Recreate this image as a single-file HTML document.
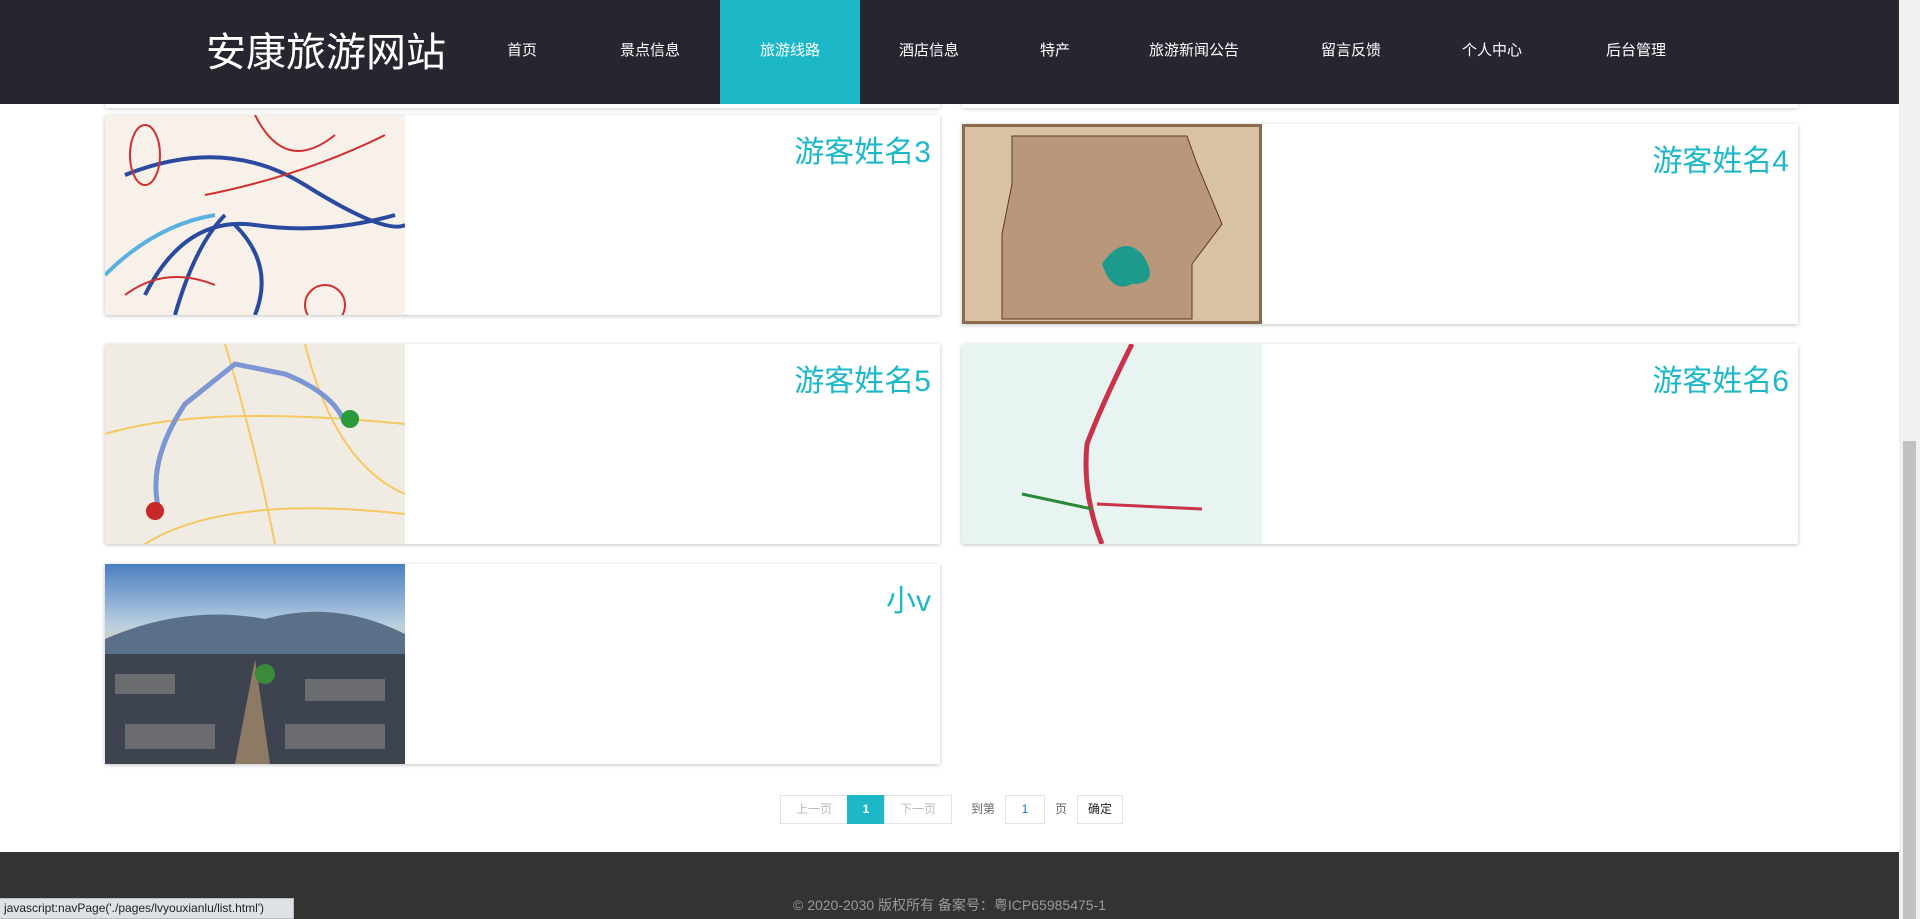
<!DOCTYPE html>
<html><head><meta charset="utf-8"><style>
*{margin:0;padding:0;box-sizing:border-box}
body{width:1920px;height:919px;overflow:hidden;background:#fff;font-family:"Liberation Sans","Noto Sans CJK SC",sans-serif;position:relative}
.hd{position:absolute;left:0;top:0;width:1899px;height:104px;background:#262630}
.logo{position:absolute;left:206px;top:25px;font-size:40px;color:#fff;line-height:56px}
.nav a{position:absolute;top:0;height:104px;line-height:102px;color:#fff;font-size:15px;text-align:center;width:140px;text-decoration:none}
.nav a.on{background:#1cb8c8}
.card{position:absolute;width:835px;height:200px;background:#fff;box-shadow:0 1px 4px rgba(0,0,0,.25);border-radius:2px}
.card .im{position:absolute;left:0;top:0;width:300px;height:200px;overflow:hidden}
.card .t{position:absolute;right:9px;top:12px;font-size:30px;color:#1cb8c8}
.pg{position:absolute;top:795px;height:29px;border:1px solid #e2e2e2;font-size:12px;line-height:27px;text-align:center;color:#bbb}
.ft{position:absolute;left:0;top:852px;width:1899px;height:67px;background:#333}
.ft p{position:absolute;top:43px;width:100%;text-align:center;color:#999;font-size:14px}
.sb{position:absolute;right:0;top:0;width:21px;height:919px;background:#f1f1f1}
.sb i{position:absolute;left:4px;top:441px;width:13px;height:478px;background:#c1c1c1}
.st{position:absolute;left:0;top:898px;width:294px;height:21px;background:#dee1e6;border:1px solid #b9bcc1;border-left:0;font-size:12px;line-height:19px;padding-left:4px;color:#222}
</style></head><body>
<div class="hd">
<div class="logo">安康旅游网站</div>
<div class="nav">
<a style="left:452px">首页</a>
<a style="left:580px">景点信息</a>
<a class="on" style="left:720px">旅游线路</a>
<a style="left:859px">酒店信息</a>
<a style="left:985px">特产</a>
<a style="left:1124px">旅游新闻公告</a>
<a style="left:1281px">留言反馈</a>
<a style="left:1422px">个人中心</a>
<a style="left:1566px">后台管理</a>
</div></div>
<div style="position:absolute;left:105px;top:80px;width:835px;height:28px;box-shadow:0 1px 4px rgba(0,0,0,.2);background:#fff;z-index:-1"></div>
<div style="position:absolute;left:962px;top:80px;width:836px;height:28px;box-shadow:0 1px 4px rgba(0,0,0,.2);background:#fff;z-index:-1"></div>

<div class="card" style="left:105px;top:115px"><div class="im"><svg width="300" height="200"><rect width="300" height="200" fill="#f8f1ea"/><g fill="none" stroke-width="4"><path d="M20 60 Q120 20 200 70 T300 110" stroke="#2a4aa0"/><path d="M40 180 Q80 100 150 110 T290 100" stroke="#2a4aa0"/><path d="M70 200 Q90 130 120 100" stroke="#2a4aa0"/><path d="M150 200 Q170 150 130 110" stroke="#2a4aa0"/><path d="M0 160 Q50 110 110 100" stroke="#5ab0e0"/></g><g fill="none" stroke="#d03030" stroke-width="2"><ellipse cx="40" cy="40" rx="15" ry="30"/><path d="M150 0 Q180 60 230 20"/><path d="M20 180 Q60 150 110 170"/><ellipse cx="220" cy="190" rx="20" ry="20"/><path d="M100 80 Q200 60 280 20"/></g></svg></div><div class="t">游客姓名3</div></div>
<div class="card" style="left:962px;top:124px;width:836px"><div class="im"><svg width="300" height="200"><rect width="300" height="200" fill="#8d6a4c"/><rect x="3" y="3" width="294" height="194" fill="#d9c2a4"/><path d="M50 12 L225 12 L235 40 L260 100 L230 140 L230 195 L40 195 L40 110 L50 60Z" fill="#b8977a" stroke="#5a3a2a"/><path d="M140 140 Q160 110 180 130 Q200 160 170 160 Q150 170 140 140Z" fill="#1c9a8c"/></svg></div><div class="t">游客姓名4</div></div>
<div class="card" style="left:105px;top:344px"><div class="im"><svg width="300" height="200"><rect width="300" height="200" fill="#f1ece3"/><g fill="none" stroke="#f5c862" stroke-width="2"><path d="M0 90 Q100 60 300 80"/><path d="M120 0 Q150 100 170 200"/><path d="M200 0 Q230 120 300 150"/><path d="M40 200 Q120 150 300 170"/></g><path d="M55 170 Q40 120 80 60 L130 20 L180 30 Q230 50 240 80" fill="none" stroke="#7c96d4" stroke-width="5"/><circle cx="245" cy="75" r="9" fill="#2a9a3a"/><circle cx="50" cy="167" r="9" fill="#c82828"/></svg></div><div class="t">游客姓名5</div></div>
<div class="card" style="left:962px;top:344px;width:836px"><div class="im"><svg width="300" height="200"><rect width="300" height="200" fill="#e8f4f2"/><path d="M170 0 Q140 60 125 100 Q120 150 140 200" fill="none" stroke="#c8334a" stroke-width="5"/><path d="M135 160 L240 165" stroke="#c8334a" stroke-width="3"/><path d="M60 150 L130 165" stroke="#2a8a3a" stroke-width="3"/></svg></div><div class="t">游客姓名6</div></div>
<div class="card" style="left:105px;top:564px"><div class="im"><svg width="300" height="200"><defs><linearGradient id="s" x1="0" y1="0" x2="0" y2="1"><stop offset="0" stop-color="#4a7fc0"/><stop offset=".3" stop-color="#b8cde0"/><stop offset=".45" stop-color="#e8d8b8"/></linearGradient></defs><rect width="300" height="200" fill="url(#s)"/><path d="M0 75 Q80 40 160 55 Q230 35 300 70 L300 95 L0 95Z" fill="#5a6f88"/><rect y="90" width="300" height="110" fill="#3d4450"/><g fill="#6a6c70"><rect x="10" y="110" width="60" height="20"/><rect x="200" y="115" width="80" height="22"/><rect x="20" y="160" width="90" height="25"/><rect x="180" y="160" width="100" height="25"/></g><path d="M130 200 L150 95 L165 200Z" fill="#8c7a64"/><circle cx="160" cy="110" r="10" fill="#3a8a3a"/></svg></div><div class="t">小v</div></div>

<div class="pg" style="left:780px;width:68px">上一页</div>
<div class="pg" style="left:847px;width:38px;background:#1cb8c8;border-color:#1cb8c8;color:#fff;font-weight:bold">1</div>
<div class="pg" style="left:884px;width:68px">下一页</div>
<div style="position:absolute;left:971px;top:795px;line-height:29px;font-size:12px;color:#666">到第</div>
<div class="pg" style="left:1005px;width:40px;color:#1a6fd0">1</div>
<div style="position:absolute;left:1055px;top:795px;line-height:29px;font-size:12px;color:#666">页</div>
<div class="pg" style="left:1077px;width:46px;color:#222">确定</div>

<div class="ft"><p>© 2020-2030 版权所有 备案号：粤ICP65985475-1</p></div>
<div class="sb"><i></i></div>
<div class="st">javascript:navPage('./pages/lvyouxianlu/list.html')</div>
</body></html>
